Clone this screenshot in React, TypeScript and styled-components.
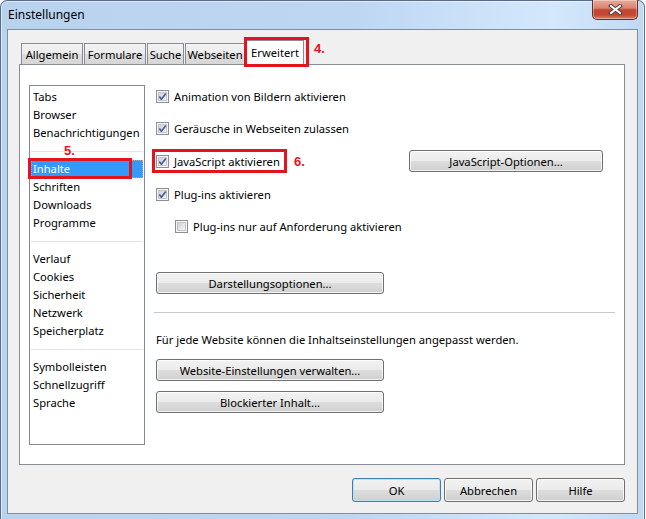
import React from 'react';
import styled, { createGlobalStyle } from 'styled-components';

const GlobalStyle = createGlobalStyle`
  html, body { margin: 0; padding: 0; background: #ffffff; }
  body {
    width: 646px; height: 519px; overflow: hidden;
    font-family: "Noto Sans", "Liberation Sans", sans-serif;
    font-size: 11.2px; color: #000;
  }
  * { box-sizing: border-box; }
`;

const Window = styled.div`
  width: 645px;
  height: 520px;
  display: flex;
  flex-direction: column;
  border: 1px solid #5a6d88;
  border-bottom: none;
  border-radius: 7px 7px 0 0;
  background: linear-gradient(90deg, #b9d3ee 0%, #bdd7f3 55%, #d3e8fc 86%, #c0d9f3 100%);
  box-shadow: inset 0 0 0 1px rgba(255, 255, 255, 0.5);
`;

const TitleBar = styled.div`
  height: 28px;
  display: flex;
  align-items: flex-start;
  padding-left: 7px;
  flex: none;
`;

const Title = styled.span`
  padding-top: 6px;
  line-height: 16px;
  font-size: 12px;
  color: #000;
`;

const CloseButton = styled.div`
  margin-left: auto;
  margin-right: 6px;
  margin-top: -1px;
  width: 46px;
  height: 20px;
  border: 1px solid #6e2d24;
  border-top: none;
  border-radius: 0 0 5px 5px;
  background: linear-gradient(#e8ab9b 0%, #d98470 42%, #c54531 52%, #c24a35 80%, #d9876c 100%);
  box-shadow: inset 0 0 0 1px rgba(255, 255, 255, 0.35);
  display: flex;
  align-items: center;
  justify-content: center;
`;

const Client = styled.div`
  flex: 1;
  margin: 0 6px 6px 6px;
  background: #f0f0f0;
  border: 1px solid #838c99;
  display: flex;
  flex-direction: column;
  padding: 10px 12px 11px 11px;
`;

const TabStrip = styled.div`
  height: 24px;
  display: flex;
  align-items: flex-end;
  padding-left: 2px;
  flex: none;
`;

const Tab = styled.div<{ $w: number; $selected?: boolean }>`
  width: ${p => p.$w}px;
  height: ${p => (p.$selected ? 25 : 21)}px;
  margin-right: 1px;
  display: flex;
  align-items: center;
  justify-content: center;
  padding-bottom: ${p => (p.$selected ? 2 : 0)}px;
  border: 1px solid #898c95;
  border-bottom: none;
  background: ${p =>
    p.$selected
      ? '#ffffff'
      : 'linear-gradient(#f3f3f3 0%, #ebebeb 50%, #dedede 51%, #d6d6d6 100%)'};
  white-space: nowrap;
`;

const Annotated = styled.div<{ $lift?: boolean }>`
  position: relative;
  display: flex;
  align-items: flex-end;
  z-index: ${p => (p.$lift ? 1 : 'auto')};
  margin-bottom: ${p => (p.$lift ? -1 : 0)}px;
`;

const RedBox = styled.span<{ $t: number; $r: number; $b: number; $l: number }>`
  position: absolute;
  top: ${p => p.$t}px;
  right: ${p => p.$r}px;
  bottom: ${p => p.$b}px;
  left: ${p => p.$l}px;
  border: 3px solid #e3141d;
  pointer-events: none;
  z-index: 2;
`;

const Marker = styled.span<{ $ml: number }>`
  font-family: "Liberation Sans", Arial, sans-serif;
  font-weight: bold;
  font-size: 13px;
  line-height: 15px;
  color: #e3141d;
  margin-left: ${p => p.$ml}px;
  align-self: center;
`;

const TabMarker = styled(Marker)`
  align-self: flex-start;
  margin-top: 1px;
`;

const Pane = styled.div`
  flex: 1;
  background: #ffffff;
  border: 1px solid #898c95;
  display: flex;
  padding: 20px 9px 19px 9px;
`;

const ListBox = styled.div`
  width: 116px;
  flex: none;
  border: 1px solid #828790;
  padding: 2px 1px;
  display: flex;
  flex-direction: column;
`;

const ListItem = styled.div<{ $selected?: boolean }>`
  height: 18px;
  line-height: 18px;
  padding-left: 2px;
  white-space: nowrap;
  color: ${p => (p.$selected ? '#ffffff' : '#000000')};
  background: ${p => (p.$selected ? '#3399ff' : 'transparent')};
  outline: ${p => (p.$selected ? '1px dotted #e0a050' : 'none')};
  outline-offset: -1px;
`;

const ListSeparator = styled.div`
  position: relative;
  height: 18px;
  display: flex;
  align-items: center;
  &::before {
    content: '';
    flex: 1;
    height: 1px;
    background: #e3e3e3;
  }
`;

const FloatingMarker = styled(Marker)`
  position: absolute;
  left: 33px;
  top: 1px;
`;

const Settings = styled.div`
  flex: 1;
  margin-left: 11px;
  display: flex;
  flex-direction: column;
`;

const CheckRows = styled.div`
  display: flex;
  flex-direction: column;
  gap: 10px;
`;

const CheckRow = styled.div<{ $indent?: number }>`
  height: 22px;
  display: flex;
  align-items: center;
  padding-left: ${p => p.$indent ?? 0}px;
  &:nth-child(3),
  &:nth-child(4) {
    margin-top: 1px;
  }
`;

const CheckLabel = styled.label<{ $w?: number }>`
  display: flex;
  align-items: center;
  gap: 5px;
  height: 22px;
  width: ${p => (p.$w ? `${p.$w}px` : 'auto')};
  white-space: nowrap;
`;

const PushButton = styled.div<{ $w: number; $h?: number; $default?: boolean; $mt?: number; $mr?: number }>`
  width: ${p => p.$w}px;
  height: ${p => p.$h ?? 22}px;
  flex: none;
  margin-top: ${p => p.$mt ?? 0}px;
  margin-left: ${p => (p.$mr !== undefined ? 'auto' : '0')};
  margin-right: ${p => p.$mr ?? 0}px;
  display: flex;
  align-items: center;
  justify-content: center;
  border: 1px solid ${p => (p.$default ? '#3c7fb1' : '#707070')};
  border-radius: 3px;
  background: linear-gradient(#f2f2f2 0%, #ebebeb 48%, #dddddd 52%, #cfcfcf 100%);
  box-shadow: inset 0 0 0 1px ${p => (p.$default ? 'rgba(180, 225, 250, 0.9)' : 'rgba(255, 255, 255, 0.75)')};
  white-space: nowrap;
  color: #000;
`;

const Divider = styled.div`
  height: 1px;
  background: #c9c9c9;
  margin: 18px 0 0 -2px;
`;

const Note = styled.div`
  margin-top: 19px;
  line-height: 16px;
  height: 16px;
  white-space: nowrap;
`;

const DialogButtons = styled.div`
  margin-top: 13px;
  display: flex;
  justify-content: flex-end;
  gap: 3px;
  flex: none;
`;

const Checkbox = ({ checked }: { checked: boolean }) => (
  <svg width="13" height="13" viewBox="0 0 13 13" style={{ flex: 'none' }}>
    <defs>
      <linearGradient id="cbFill" x1="0" y1="0" x2="1" y2="1">
        <stop offset="0" stopColor="#c9cdd3" />
        <stop offset="1" stopColor="#f8f8f8" />
      </linearGradient>
    </defs>
    <rect x="0.5" y="0.5" width="12" height="12" fill="#f5f5f5" stroke="#8e8f8f" />
    <rect x="2.5" y="2.5" width="8" height="8" fill="url(#cbFill)" stroke="#c3c7cc" />
    {checked && (
      <path d="M3.3 6.4 L5.4 9.2 L9.8 3.4" fill="none" stroke="#4a5e96" strokeWidth="1.7" strokeLinejoin="round" />
    )}
  </svg>
);

const CloseGlyph = () => (
  <svg width="15" height="11" viewBox="0 0 15 11">
    <path d="M3 2 L12 9 M12 2 L3 9" stroke="#4a3a38" strokeWidth="4" strokeLinecap="square" />
    <path d="M3 2 L12 9 M12 2 L3 9" stroke="#ffffff" strokeWidth="2" strokeLinecap="square" />
  </svg>
);

const tabs = [
  { label: 'Allgemein', w: 62 },
  { label: 'Formulare', w: 62 },
  { label: 'Suche', w: 37 },
  { label: 'Webseiten', w: 60 },
];

type Entry = { kind: 'item'; label: string; selected?: boolean } | { kind: 'sep'; marker?: string };

const listEntries: Entry[] = [
  { kind: 'item', label: 'Tabs' },
  { kind: 'item', label: 'Browser' },
  { kind: 'item', label: 'Benachrichtigungen' },
  { kind: 'sep', marker: '5.' },
  { kind: 'item', label: 'Inhalte', selected: true },
  { kind: 'item', label: 'Schriften' },
  { kind: 'item', label: 'Downloads' },
  { kind: 'item', label: 'Programme' },
  { kind: 'sep' },
  { kind: 'item', label: 'Verlauf' },
  { kind: 'item', label: 'Cookies' },
  { kind: 'item', label: 'Sicherheit' },
  { kind: 'item', label: 'Netzwerk' },
  { kind: 'item', label: 'Speicherplatz' },
  { kind: 'sep' },
  { kind: 'item', label: 'Symbolleisten' },
  { kind: 'item', label: 'Schnellzugriff' },
  { kind: 'item', label: 'Sprache' },
];

export default function App() {
  return (
    <>
      <GlobalStyle />
      <Window>
        <TitleBar>
          <Title>Einstellungen</Title>
          <CloseButton>
            <CloseGlyph />
          </CloseButton>
        </TitleBar>
        <Client>
          <TabStrip>
            {tabs.map(t => (
              <Tab key={t.label} $w={t.w}>
                {t.label}
              </Tab>
            ))}
            <Annotated $lift>
              <Tab $w={58} $selected>
                Erweitert
              </Tab>
              <RedBox $t={-3} $r={-4} $b={-2} $l={-2} />
            </Annotated>
            <TabMarker $ml={9}>4.</TabMarker>
          </TabStrip>
          <Pane>
            <ListBox>
              {listEntries.map((e, i) =>
                e.kind === 'sep' ? (
                  <ListSeparator key={i}>{e.marker && <FloatingMarker $ml={0}>{e.marker}</FloatingMarker>}</ListSeparator>
                ) : e.selected ? (
                  <Annotated key={i}>
                    <ListItem $selected style={{ flex: 1 }}>
                      {e.label}
                    </ListItem>
                    <RedBox $t={-2} $r={11} $b={-1} $l={-3} />
                  </Annotated>
                ) : (
                  <ListItem key={i}>{e.label}</ListItem>
                )
              )}
            </ListBox>
            <Settings>
              <CheckRows>
                <CheckRow>
                  <CheckLabel>
                    <Checkbox checked />
                    Animation von Bildern aktivieren
                  </CheckLabel>
                </CheckRow>
                <CheckRow>
                  <CheckLabel>
                    <Checkbox checked />
                    Geräusche in Webseiten zulassen
                  </CheckLabel>
                </CheckRow>
                <CheckRow>
                  <Annotated>
                    <CheckLabel $w={126}>
                      <Checkbox checked />
                      JavaScript aktivieren
                    </CheckLabel>
                    <RedBox $t={-1} $r={-5} $b={-1} $l={-4} />
                  </Annotated>
                  <Marker $ml={12}>6.</Marker>
                  <PushButton $w={194} $mr={12}>
                    JavaScript-Optionen...
                  </PushButton>
                </CheckRow>
                <CheckRow>
                  <CheckLabel>
                    <Checkbox checked />
                    Plug-ins aktivieren
                  </CheckLabel>
                </CheckRow>
                <CheckRow $indent={19}>
                  <CheckLabel>
                    <Checkbox checked={false} />
                    Plug-ins nur auf Anforderung aktivieren
                  </CheckLabel>
                </CheckRow>
              </CheckRows>
              <PushButton $w={228} $mt={35}>
                Darstellungsoptionen...
              </PushButton>
              <Divider />
              <Note>Für jede Website können die Inhaltseinstellungen angepasst werden.</Note>
              <PushButton $w={228} $mt={11}>
                Website-Einstellungen verwalten...
              </PushButton>
              <PushButton $w={228} $mt={10}>
                Blockierter Inhalt...
              </PushButton>
            </Settings>
          </Pane>
          <DialogButtons>
            <PushButton $w={89} $h={24} $default>
              OK
            </PushButton>
            <PushButton $w={89} $h={24}>
              Abbrechen
            </PushButton>
            <PushButton $w={89} $h={24}>
              Hilfe
            </PushButton>
          </DialogButtons>
        </Client>
      </Window>
    </>
  );
}
